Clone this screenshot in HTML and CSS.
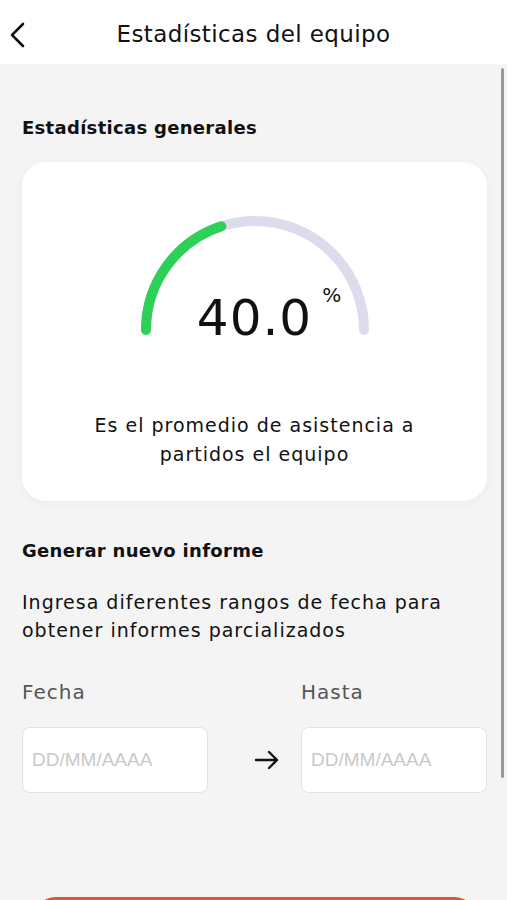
FILE: index.html
```html
<!DOCTYPE html>
<html lang="es">
<head>
    <meta charset="UTF-8">
    <meta name="viewport" content="width=device-width, initial-scale=1.0">
    <title>Estadísticas del equipo</title>
    <link rel="stylesheet" href="styles.css">
</head>
<body>
    <header class="topbar">
        <button class="back-btn" aria-label="Volver">
            <svg width="20" height="26" viewBox="0 0 20 26">
                <path d="M15 2 L4 13 L15 24" fill="none" stroke="#111" stroke-width="2.6" stroke-linecap="round" stroke-linejoin="round"/>
            </svg>
        </button>
        <h1 class="topbar-title">Estadísticas del equipo</h1>
    </header>

    <main class="content">
        <h2 class="section-title">Estadísticas generales</h2>

        <section class="stats-card">
            <div class="gauge">
                <svg width="240" height="130" viewBox="0 0 240 130">
                    <path d="M11 120 A109 109 0 0 1 229 120" fill="none" stroke="#dcdcec" stroke-width="10" stroke-linecap="round"/>
                    <!-- 40% of the half circle -->
                    <path d="M11 120 A109 109 0 0 1 86.3 16.3" fill="none" stroke="#2ed158" stroke-width="10" stroke-linecap="round"/>
                </svg>
                <div class="gauge-value">40.0<span class="gauge-unit">%</span></div>
            </div>
            <p class="stats-desc">Es el promedio de asistencia a<br>partidos el equipo</p>
        </section>

        <h2 class="section-title report-title">Generar nuevo informe</h2>
        <p class="report-desc">Ingresa diferentes rangos de fecha para<br>obtener informes parcializados</p>

        <div class="date-range">
            <div class="date-field">
                <label for="dateFrom">Fecha</label>
                <input type="text" id="dateFrom" placeholder="DD/MM/AAAA">
            </div>
            <div class="date-arrow">
                <svg width="26" height="20" viewBox="0 0 26 20">
                    <path d="M2 10 H23 M15 2 L23 10 L15 18" fill="none" stroke="#111" stroke-width="2.4" stroke-linecap="round" stroke-linejoin="round"/>
                </svg>
            </div>
            <div class="date-field">
                <label for="dateTo">Hasta</label>
                <input type="text" id="dateTo" placeholder="DD/MM/AAAA">
            </div>
        </div>

        <button class="generate-btn">Generar informe</button>
    </main>

    <div class="scroll-thumb"></div>
</body>
</html>
```

FILE: styles.css
```css
body {
    margin: 0;
    background-color: #f4f4f4;
    font-family: "DejaVu Sans", sans-serif;
    color: #111;
    overflow: hidden;
}

.topbar {
    height: 64px;
    background: #fff;
    display: flex;
    align-items: center;
    justify-content: center;
    position: relative;
}

.back-btn {
    position: absolute;
    left: 8px;
    top: 22px;
    background: none;
    border: none;
    padding: 0;
}

.topbar-title {
    margin: 3px 0 0;
    font-size: 23px;
    font-weight: normal;
    letter-spacing: 0.4px;
}

.content {
    padding: 0 20px 0 22px;
}

.section-title {
    margin: 0;
    padding-top: 50px;
    font-size: 18px;
    font-weight: bold;
    line-height: 28px;
    letter-spacing: 0.3px;
}

.stats-card {
    margin-top: 20px;
    background: #fff;
    border-radius: 24px;
    box-shadow: 0 2px 10px rgba(0, 0, 0, 0.04);
    padding: 48px 0 32px;
    text-align: center;
}

.gauge {
    position: relative;
    width: 240px;
    height: 130px;
    margin: 0 auto;
}

.gauge svg {
    display: block;
}

.gauge-value {
    position: absolute;
    left: 0;
    right: 0;
    top: 78px;
    font-size: 50px;
    line-height: 60px;
    letter-spacing: 1px;
}

.gauge-unit {
    position: absolute;
    top: -5px;
    margin-left: 10px;
    font-size: 20px;
    line-height: normal;
}

.stats-desc {
    margin: 71px 0 0;
    font-size: 19px;
    line-height: 29px;
    letter-spacing: 1px;
}

.report-title {
    padding-top: 36px;
}

.report-desc {
    margin: 23px 0 0;
    font-size: 19px;
    line-height: 28px;
    letter-spacing: 1px;
}

.date-range {
    display: flex;
    align-items: flex-end;
    margin-top: 34px;
}

.date-field {
    width: 186px;
    display: flex;
    flex-direction: column;
}

.date-field label {
    font-size: 20px;
    color: #555;
    line-height: 28px;
    letter-spacing: 1px;
}

.date-field input {
    margin-top: 21px;
    height: 66px;
    box-sizing: border-box;
    border: 1px solid #e2e2e2;
    border-radius: 8px;
    background: #fff;
    padding: 0 9px;
    font-family: "Liberation Sans", Arial, sans-serif;
    font-size: 19px;
}

.date-field input::placeholder {
    color: #c9c9c9;
}

.date-arrow {
    flex: 1;
    height: 66px;
    padding-left: 24px;
    display: flex;
    align-items: center;
    justify-content: center;
}

.generate-btn {
    display: block;
    margin: 104px auto 0;
    width: 448px;
    height: 50px;
    border: none;
    border-radius: 25px;
    background: #e8512a;
    color: #fff;
    font-family: inherit;
    font-size: 19px;
    font-weight: bold;
}

.scroll-thumb {
    position: absolute;
    top: 68px;
    right: 3px;
    width: 3px;
    height: 710px;
    border-radius: 2px;
    background: #999;
}
```
